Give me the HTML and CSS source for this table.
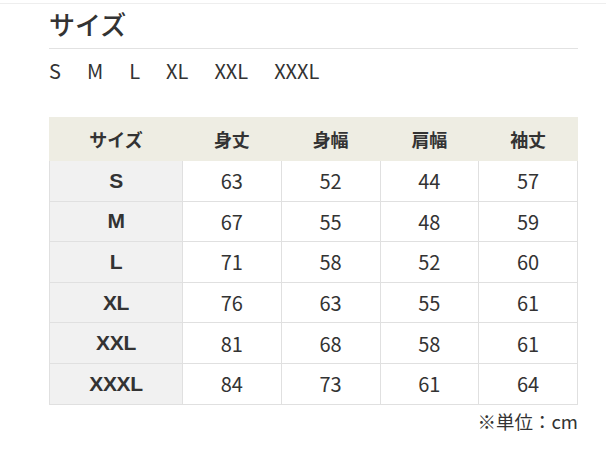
FILE: index.html
```html
<!DOCTYPE html>
<html lang="ja">
<head>
<meta charset="utf-8">
<link rel="stylesheet" href="styles.css">
</head>
<body>
<div class="topline"></div>
<section class="sec">
  <h2 class="title">サイズ</h2>
  <div class="sizes"><span>S</span><span>M</span><span>L</span><span>XL</span><span>XXL</span><span>XXXL</span></div>
  <table class="tbl">
    <thead>
      <tr><th>サイズ</th><th>身丈</th><th>身幅</th><th>肩幅</th><th>袖丈</th></tr>
    </thead>
    <tbody>
      <tr><th>S</th><td>63</td><td>52</td><td>44</td><td>57</td></tr>
      <tr><th>M</th><td>67</td><td>55</td><td>48</td><td>59</td></tr>
      <tr><th>L</th><td>71</td><td>58</td><td>52</td><td>60</td></tr>
      <tr><th>XL</th><td>76</td><td>63</td><td>55</td><td>61</td></tr>
      <tr><th>XXL</th><td>81</td><td>68</td><td>58</td><td>61</td></tr>
      <tr><th>XXXL</th><td>84</td><td>73</td><td>61</td><td>64</td></tr>
    </tbody>
  </table>
  <p class="note">※単位：cm</p>
</section>
</body>
</html>
```
FILE: styles.css
```css
html, body { margin: 0; padding: 0; background: #fff; }
body { font-family: "Noto Sans CJK JP", "Noto Sans", sans-serif; color: #333; }
.topline { height: 3px; border-bottom: 1px solid #eee; }
.sec { padding: 0 28px 0 49px; }
.title {
  margin: 0; font-size: 26px; font-weight: 500; line-height: 40px;
  padding-bottom: 4px; border-bottom: 1px solid #e2e2e2;
}
.sizes { margin-top: 9px; font-size: 20px; line-height: 26px; display: flex; gap: 26px; color: #333; }
.tbl {
  margin-top: 33px; width: 529px; border-collapse: collapse; table-layout: fixed;
}
.tbl th, .tbl td {
  border: 1px solid #e0e0e0; height: 39.6px; padding: 0; text-align: center;
  font-size: 20px; font-weight: 400;
}
.tbl thead th { background: #eeede3; font-weight: 700; font-size: 18px; border-color: #eeede3; height: 42px; }
.tbl thead th:first-child { width: 132px; }
.tbl tbody th { background: #f1f1f1; font-weight: 700; font-family: "Liberation Sans", Arial, sans-serif; font-size: 21px; letter-spacing: -0.3px; }
.note { margin: 4px 0 0; width: 529px; text-align: right; font-size: 18.5px; line-height: 24px; }
```
